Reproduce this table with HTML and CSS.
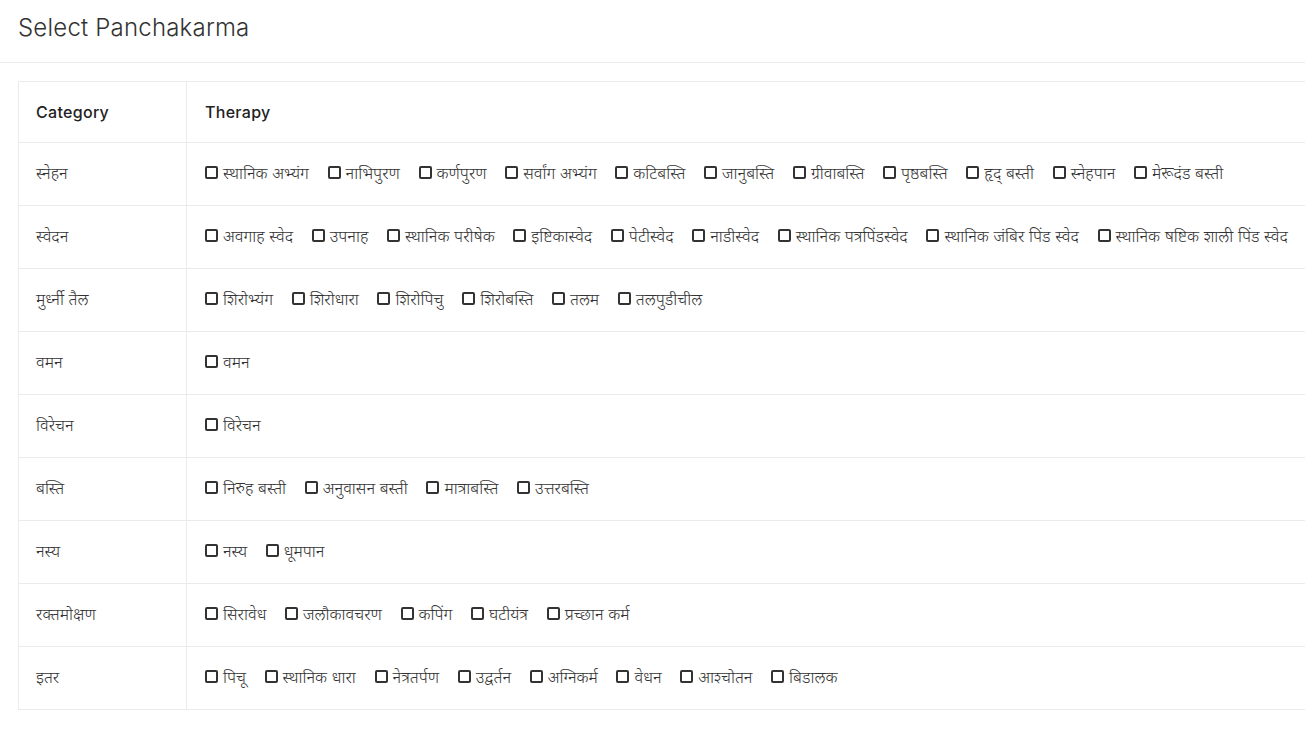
FILE: index.html
```html
<!DOCTYPE html>
<html lang="mr">
<head>
    <meta charset="UTF-8">
    <meta name="viewport" content="width=device-width, initial-scale=1.0">
    <title>Select Panchakarma</title>
    <link rel="stylesheet" href="styles.css">
</head>
<body>
    <div class="modal">
        <div class="modal-header">
            <h3 class="modal-title">Select Panchakarma</h3>
        </div>
        <div class="modal-body">
            <table class="therapy-table">
                <tr>
                    <th>Category</th>
                    <th>Therapy</th>
                </tr>
                <tr>
                    <td>स्नेहन</td>
                    <td>
                        <label class="item"><input type="checkbox"> स्थानिक अभ्यंग</label>
                        <label class="item"><input type="checkbox"> नाभिपुरण</label>
                        <label class="item"><input type="checkbox"> कर्णपुरण</label>
                        <label class="item"><input type="checkbox"> सर्वांग अभ्यंग</label>
                        <label class="item"><input type="checkbox"> कटिबस्ति</label>
                        <label class="item"><input type="checkbox"> जानुबस्ति</label>
                        <label class="item"><input type="checkbox"> ग्रीवाबस्ति</label>
                        <label class="item"><input type="checkbox"> पृष्ठबस्ति</label>
                        <label class="item"><input type="checkbox"> हृद् बस्ती</label>
                        <label class="item"><input type="checkbox"> स्नेहपान</label>
                        <label class="item"><input type="checkbox"> मेरूदंड बस्ती</label>
                    </td>
                </tr>
                <tr>
                    <td>स्वेदन</td>
                    <td>
                        <label class="item"><input type="checkbox"> अवगाह स्वेद</label>
                        <label class="item"><input type="checkbox"> उपनाह</label>
                        <label class="item"><input type="checkbox"> स्थानिक परीषेक</label>
                        <label class="item"><input type="checkbox"> इष्टिकास्वेद</label>
                        <label class="item"><input type="checkbox"> पेटीस्वेद</label>
                        <label class="item"><input type="checkbox"> नाडीस्वेद</label>
                        <label class="item"><input type="checkbox"> स्थानिक पत्रपिंडस्वेद</label>
                        <label class="item"><input type="checkbox"> स्थानिक जंबिर पिंड स्वेद</label>
                        <label class="item"><input type="checkbox"> स्थानिक षष्टिक शाली पिंड स्वेद</label>
                    </td>
                </tr>
                <tr>
                    <td>मुर्ध्नी तैल</td>
                    <td>
                        <label class="item"><input type="checkbox"> शिरोभ्यंग</label>
                        <label class="item"><input type="checkbox"> शिरोधारा</label>
                        <label class="item"><input type="checkbox"> शिरोपिचु</label>
                        <label class="item"><input type="checkbox"> शिरोबस्ति</label>
                        <label class="item"><input type="checkbox"> तलम</label>
                        <label class="item"><input type="checkbox"> तलपुडीचील</label>
                    </td>
                </tr>
                <tr>
                    <td>वमन</td>
                    <td>
                        <label class="item"><input type="checkbox"> वमन</label>
                    </td>
                </tr>
                <tr>
                    <td>विरेचन</td>
                    <td>
                        <label class="item"><input type="checkbox"> विरेचन</label>
                    </td>
                </tr>
                <tr>
                    <td>बस्ति</td>
                    <td>
                        <label class="item"><input type="checkbox"> निरुह बस्ती</label>
                        <label class="item"><input type="checkbox"> अनुवासन बस्ती</label>
                        <label class="item"><input type="checkbox"> मात्राबस्ति</label>
                        <label class="item"><input type="checkbox"> उत्तरबस्ति</label>
                    </td>
                </tr>
                <tr>
                    <td>नस्य</td>
                    <td>
                        <label class="item"><input type="checkbox"> नस्य</label>
                        <label class="item"><input type="checkbox"> धूमपान</label>
                    </td>
                </tr>
                <tr>
                    <td>रक्तमोक्षण</td>
                    <td>
                        <label class="item"><input type="checkbox"> सिरावेध</label>
                        <label class="item"><input type="checkbox"> जलौकावचरण</label>
                        <label class="item"><input type="checkbox"> कपिंग</label>
                        <label class="item"><input type="checkbox"> घटीयंत्र</label>
                        <label class="item"><input type="checkbox"> प्रच्छान कर्म</label>
                    </td>
                </tr>
                <tr>
                    <td>इतर</td>
                    <td>
                        <label class="item"><input type="checkbox"> पिचू</label>
                        <label class="item"><input type="checkbox"> स्थानिक धारा</label>
                        <label class="item"><input type="checkbox"> नेत्रतर्पण</label>
                        <label class="item"><input type="checkbox"> उद्वर्तन</label>
                        <label class="item"><input type="checkbox"> अग्निकर्म</label>
                        <label class="item"><input type="checkbox"> वेधन</label>
                        <label class="item"><input type="checkbox"> आश्चोतन</label>
                        <label class="item"><input type="checkbox"> बिडालक</label>
                    </td>
                </tr>
            </table>
        </div>
    </div>
</body>
</html>
```

FILE: styles.css
```css
html,
body {
    margin: 0;
    padding: 0;
    background: #fff;
    overflow: hidden;
}

body {
    font-family: Inter, "Noto Sans", "Liberation Sans", sans-serif;
    color: #333;
}

.modal-header {
    height: 62px;
    padding: 0 18px;
    border-bottom: 1px solid #e9ecef;
    display: flex;
    align-items: center;
}

.modal-title {
    margin: 0;
    margin-top: -8px;
    font-size: 24px;
    font-weight: 300;
    letter-spacing: 0.2px;
    color: #333;
}

.modal-body {
    padding: 18px 0 0 18px;
}

.therapy-table {
    width: 1340px;
    border-collapse: collapse;
    white-space: nowrap;
}

.therapy-table th,
.therapy-table td {
    height: 58px;
    padding: 0 18px 4px;
    border: 1px solid #e9ecef;
    text-align: left;
    vertical-align: middle;
    font-size: 16.5px;
    font-weight: 300;
    color: #333;
}

.therapy-table th {
    height: 60px;
    padding-bottom: 0;
    font-size: 16px;
    font-weight: 500;
    letter-spacing: 0.3px;
    color: #222;
}

.therapy-table th:first-child,
.therapy-table td:first-child {
    width: 132px;
    padding-left: 17px;
}

.item {
    display: inline-flex;
    align-items: center;
    margin-right: 14px;
    font-size: 16.5px;
    font-weight: 300;
}

.item:last-child {
    margin-right: 0;
}

.item input {
    appearance: none;
    width: 13px;
    height: 13px;
    margin: 0 5px 0 0;
    border: 2px solid #333;
    border-radius: 2px;
    background: #fff;
}
```
